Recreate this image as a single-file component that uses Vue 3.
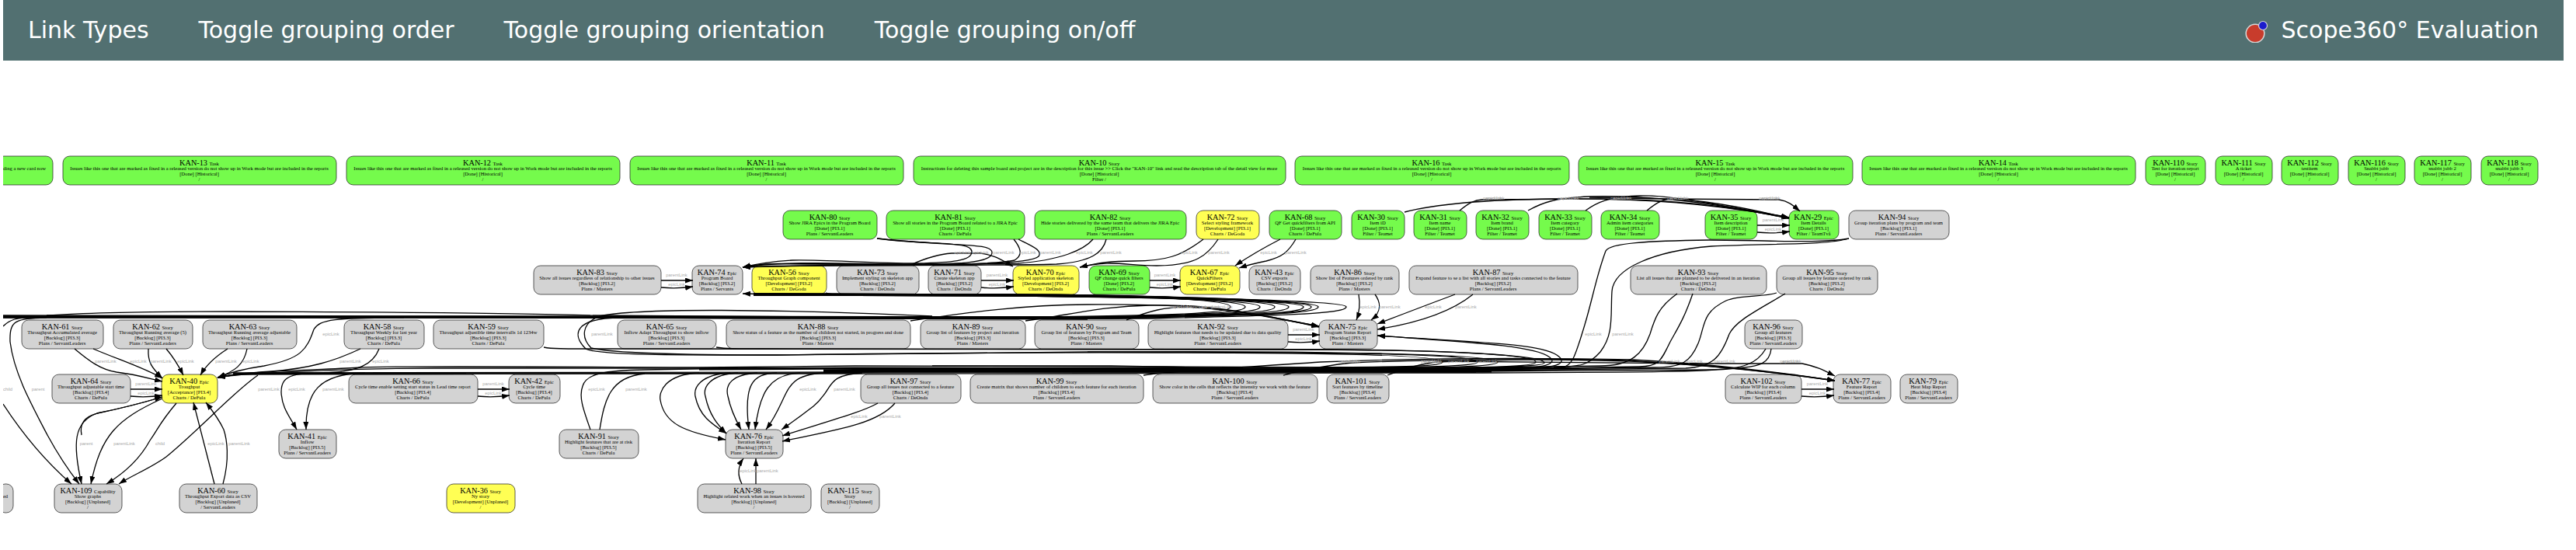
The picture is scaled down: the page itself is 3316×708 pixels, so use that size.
<script setup>
// The graph is laid out in points; coordinates below are on a grid of 15/11 points.
const U = 15 / 11
const ROW_H = 37
const rowTop = [201, 271, 342, 412, 482, 553, 623]
const viewBox = [4, 78, 3296, 630].map((v) => v * U).join(' ')

const menu = [
  'Link Types',
  'Toggle grouping order',
  'Toggle grouping orientation',
  'Toggle grouping on/off',
]

const fixed =
  'Issues like this one that are marked as fixed in a released version do not show up in Work mode but are included in the reports'

// row, left, right, color, key, type, summary, status, team
const rawNodes = [
  [0, -4, 68, 'done', '', '', 'ding a new card now', '', ''],
  [0, 81, 433, 'done', 'KAN-13', 'Task', fixed, '[Done] [Historical]', '/'],
  [0, 446, 798, 'done', 'KAN-12', 'Task', fixed, '[Done] [Historical]', '/'],
  [0, 811, 1163, 'done', 'KAN-11', 'Task', fixed, '[Done] [Historical]', '/'],
  [0, 1176, 1655, 'done', 'KAN-10', 'Story', 'Instructions for deleting this sample board and project are in the description for this issue >> Click the "KAN-10" link and read the description tab of the detail view for more', '[Done] [Historical]', 'Filter /'],
  [0, 1667, 2020, 'done', 'KAN-16', 'Task', fixed, '[Done] [Historical]', '/'],
  [0, 2032, 2385, 'done', 'KAN-15', 'Task', fixed, '[Done] [Historical]', '/'],
  [0, 2397, 2749, 'done', 'KAN-14', 'Task', fixed, '[Done] [Historical]', '/'],
  [0, 2762, 2839, 'done', 'KAN-110', 'Story', 'Test for iteration report', '[Done] [Historical]', '/'],
  [0, 2852, 2925, 'done', 'KAN-111', 'Story', 'A ticket', '[Done] [Historical]', '/'],
  [0, 2937, 3010, 'done', 'KAN-112', 'Story', 'testitem', '[Done] [Historical]', '/'],
  [0, 3023, 3096, 'done', 'KAN-116', 'Story', 'Snabbt jobb', '[Done] [Historical]', '/'],
  [0, 3108, 3181, 'done', 'KAN-117', 'Story', 'snabbt jobb 2', '[Done] [Historical]', '/'],
  [0, 3194, 3267, 'done', 'KAN-118', 'Story', 'snabbt jobb 3', '[Done] [Historical]', '/'],

  [1, 1008, 1129, 'done', 'KAN-80', 'Story', 'Show JIRA Epics in the Program Board', '[Done] [PI3.1]', 'Plans / ServantLeaders'],
  [1, 1141, 1319, 'done', 'KAN-81', 'Story', 'Show all stories in the Program Board related to a JIRA Epic', '[Done] [PI3.1]', 'Charts / DeFula'],
  [1, 1332, 1527, 'done', 'KAN-82', 'Story', 'Hide stories delivered by the same team that delivers the JIRA Epic', '[Done] [PI3.1]', 'Plans / ServantLeaders'],
  [1, 1540, 1621, 'active', 'KAN-72', 'Story', 'Select styling framework', '[Development] [PI3.1]', 'Charts / DeGoda'],
  [1, 1634, 1727, 'done', 'KAN-68', 'Story', 'QF Get quickfilters from API', '[Done] [PI3.1]', 'Charts / DeFula'],
  [1, 1740, 1808, 'done', 'KAN-30', 'Story', 'Item iD', '[Done] [PI3.1]', 'Filter / Teamet'],
  [1, 1820, 1888, 'done', 'KAN-31', 'Story', 'Item name', '[Done] [PI3.1]', 'Filter / Teamet'],
  [1, 1900, 1968, 'done', 'KAN-32', 'Story', 'Item brand', '[Done] [PI3.1]', 'Filter / Teamet'],
  [1, 1981, 2049, 'done', 'KAN-33', 'Story', 'Item category', '[Done] [PI3.1]', 'Filter / Teamet'],
  [1, 2061, 2136, 'done', 'KAN-34', 'Story', 'Admin item categories', '[Done] [PI3.1]', 'Filter / Teamet'],
  [1, 2195, 2262, 'done', 'KAN-35', 'Story', 'Item description', '[Done] [PI3.1]', 'Filter / Teamet'],
  [1, 2303, 2367, 'done', 'KAN-29', 'Epic', 'Item Details', '[Done] [PI3.1]', 'Filter / TeamTvå'],
  [1, 2380, 2509, 'open', 'KAN-94', 'Story', 'Group iteration plans by program and team', '[Backlog] [PI3.1]', 'Plans / ServantLeaders'],

  [2, 687, 851, 'open', 'KAN-83', 'Story', 'Show all issues regardless of relationship to other issues', '[Backlog] [PI3.2]', 'Plans / Masters'],
  [2, 891, 956, 'open', 'KAN-74', 'Epic', 'Program Board', '[Backlog] [PI3.2]', 'Plans / Servants'],
  [2, 968, 1064, 'active', 'KAN-56', 'Story', 'Throughput Graph component', '[Development] [PI3.2]', 'Charts / DeGoda'],
  [2, 1077, 1183, 'open', 'KAN-73', 'Story', 'Implement styling on skeleton app', '[Backlog] [PI3.2]', 'Charts / DeOnda'],
  [2, 1195, 1263, 'open', 'KAN-71', 'Story', 'Create skeleton app', '[Backlog] [PI3.2]', 'Charts / DeOnda'],
  [2, 1304, 1389, 'active', 'KAN-70', 'Epic', 'Styled application skeleton', '[Development] [PI3.2]', 'Charts / DeOnda'],
  [2, 1402, 1480, 'done', 'KAN-69', 'Story', 'QF change quick filters', '[Done] [PI3.2]', 'Charts / DeFula'],
  [2, 1519, 1596, 'active', 'KAN-67', 'Epic', 'QuickFilters', '[Development] [PI3.2]', 'Charts / DeFula'],
  [2, 1608, 1674, 'open', 'KAN-43', 'Epic', 'CSV exports', '[Backlog] [PI3.2]', 'Charts / DeOnda'],
  [2, 1687, 1801, 'open', 'KAN-86', 'Story', 'Show list of Features ordered by rank', '[Backlog] [PI3.2]', 'Plans / Masters'],
  [2, 1814, 2031, 'open', 'KAN-87', 'Story', 'Expand feature to se a list with all stories and tasks connected to the feature', '[Backlog] [PI3.2]', 'Plans / ServantLeaders'],
  [2, 2099, 2274, 'open', 'KAN-93', 'Story', 'List all issues that are planned to be delivered in an iteration', '[Backlog] [PI3.2]', 'Charts / DeOnda'],
  [2, 2287, 2417, 'open', 'KAN-95', 'Story', 'Group all issues by feature ordered by rank', '[Backlog] [PI3.2]', 'Charts / DeOnda'],

  [3, 28, 133, 'open', 'KAN-61', 'Story', 'Throughput Accumulated average', '[Backlog] [PI3.3]', 'Plans / ServantLeaders'],
  [3, 146, 248, 'open', 'KAN-62', 'Story', 'Throughput Running average (5)', '[Backlog] [PI3.3]', 'Plans / ServantLeaders'],
  [3, 261, 382, 'open', 'KAN-63', 'Story', 'Throughput Running average adjustable', '[Backlog] [PI3.3]', 'Plans / ServantLeaders'],
  [3, 443, 546, 'open', 'KAN-58', 'Story', 'Throughput Weekly for last year', '[Backlog] [PI3.3]', 'Charts / DeFula'],
  [3, 558, 700, 'open', 'KAN-59', 'Story', 'Throughput adjustible time intervalls 1d 1234w', '[Backlog] [PI3.3]', 'Charts / DeFula'],
  [3, 795, 922, 'open', 'KAN-65', 'Story', 'Inflow Adapt Throughput to show inflow', '[Backlog] [PI3.3]', 'Plans / ServantLeaders'],
  [3, 935, 1172, 'open', 'KAN-88', 'Story', 'Show status of a feature as the number of children not started, in progress and done', '[Backlog] [PI3.3]', 'Plans / Masters'],
  [3, 1185, 1320, 'open', 'KAN-89', 'Story', 'Group list of features by project and iteration', '[Backlog] [PI3.3]', 'Plans / Masters'],
  [3, 1332, 1466, 'open', 'KAN-90', 'Story', 'Group list of features by Program and Team', '[Backlog] [PI3.3]', 'Plans / Masters'],
  [3, 1478, 1658, 'open', 'KAN-92', 'Story', 'Highlight features that needs to be updated due to data quality', '[Backlog] [PI3.3]', 'Plans / ServantLeaders'],
  [3, 1698, 1773, 'open', 'KAN-75', 'Epic', 'Program Status Report', '[Backlog] [PI3.3]', 'Plans / Masters'],
  [3, 2246, 2320, 'open', 'KAN-96', 'Story', 'Group all features', '[Backlog] [PI3.3]', 'Plans / ServantLeaders'],

  [4, 67, 168, 'open', 'KAN-64', 'Story', 'Throughput adjustable start time', '[Backlog] [PI3.4]', 'Charts / DeFula'],
  [4, 208, 280, 'active', 'KAN-40', 'Epic', 'Troughput', '[Acceptance] [PI3.4]', 'Charts / DeFula'],
  [4, 449, 615, 'open', 'KAN-66', 'Story', 'Cycle time enable setting start status in Lead time report', '[Backlog] [PI3.4]', 'Charts / DeFula'],
  [4, 655, 721, 'open', 'KAN-42', 'Epic', 'Cycle time', '[Backlog] [PI3.4]', 'Charts / DeFula'],
  [4, 1108, 1237, 'open', 'KAN-97', 'Story', 'Group all issues not connected to a feature', '[Backlog] [PI3.4]', 'Charts / DeOnda'],
  [4, 1249, 1472, 'open', 'KAN-99', 'Story', 'Create matrix that shows number of children to each feature for each iteration', '[Backlog] [PI3.4]', 'Plans / ServantLeaders'],
  [4, 1484, 1696, 'open', 'KAN-100', 'Story', 'Show color in the cells that reflects the intensity we work with the feature', '[Backlog] [PI3.4]', 'Plans / ServantLeaders'],
  [4, 1708, 1788, 'open', 'KAN-101', 'Story', 'Sort features by timeline', '[Backlog] [PI3.4]', 'Plans / ServantLeaders'],
  [4, 2221, 2319, 'open', 'KAN-102', 'Story', 'Calculate WIP for each column', '[Backlog] [PI3.4]', 'Plans / ServantLeaders'],
  [4, 2360, 2434, 'open', 'KAN-77', 'Epic', 'Feature Report', '[Backlog] [PI3.4]', 'Plans / ServantLeaders'],
  [4, 2446, 2520, 'open', 'KAN-79', 'Epic', 'Heat Map Report', '[Backlog] [PI3.4]', 'Plans / ServantLeaders'],

  [5, 359, 433, 'open', 'KAN-41', 'Epic', 'Inflow', '[Backlog] [PI3.5]', 'Plans / ServantLeaders'],
  [5, 720, 822, 'open', 'KAN-91', 'Story', 'Highlight features that are at risk', '[Backlog] [PI3.5]', 'Charts / DeFula'],
  [5, 934, 1008, 'open', 'KAN-76', 'Epic', 'Iteration Report', '[Backlog] [PI3.5]', 'Plans / ServantLeaders'],

  [6, -2, 17, 'open', '', '', 'ed', '', ''],
  [6, 70, 157, 'open', 'KAN-109', 'Capability', 'Show graphs', '[Backlog] [Unplaned]', '/'],
  [6, 231, 331, 'open', 'KAN-60', 'Story', 'Throughput Export data as CSV', '[Backlog] [Unplaned]', '/ ServantLeaders'],
  [6, 575, 663, 'active', 'KAN-36', 'Story', 'Ny story', '[Development] [Unplaned]', '/'],
  [6, 898, 1044, 'open', 'KAN-98', 'Story', 'Highlight related work when an issues is hovered', '[Backlog] [Unplaned]', '/'],
  [6, 1057, 1132, 'open', 'KAN-115', 'Story', 'Story', '[Backlog] [Unplaned]', '/'],
]

const nodes = rawNodes.map(([row, l, r, color, key, type, summary, status, team]) => ({
  l, r, color, key, type, summary, status, team,
  top: rowTop[row],
  x: l * U,
  y: rowTop[row] * U,
  w: (r - l) * U,
  h: ROW_H * U,
  cx: ((l + r - 1) / 2) * U,
}))

const byKey = Object.fromEntries(nodes.map((n) => [n.key, n]))

// Neighbours in one row joined by a parentLink and an epicLink.
const pairs = [
  ['KAN-83', 'KAN-74'], ['KAN-71', 'KAN-70'], ['KAN-69', 'KAN-67'], ['KAN-35', 'KAN-29'],
  ['KAN-92', 'KAN-75'], ['KAN-64', 'KAN-40'], ['KAN-66', 'KAN-42'], ['KAN-102', 'KAN-77'],
].map(([a, b]) => ({ x1: byKey[a].r, x2: byKey[b].l, y: byKey[a].top }))

const arrows = [
  // KAN-80, KAN-81, KAN-82 to KAN-74
  'M1129 307C1200 316 1251 310 1251 324C1251 336 1225 338 1180 339C1120 339 1060 334 1020 335Q985 337 956 344',
  'M1129 307C1230 318 1277 312 1277 325C1277 340 1230 340 1150 340C1080 339 1010 336 956 344',
  'M1305 308C1313 318 1318 328 1306 335C1280 342 1150 341 1060 340S990 339 956 344',
  'M1311 308C1325 315 1343 322 1337 330C1325 341 1230 341 1100 340S990 339 956 344',
  'M1407 308C1395 322 1365 335 1310 339C1200 342 1050 340 956 344',
  'M1424 308C1420 325 1405 337 1360 340C1250 343 1050 340 956 344',
  'M1172 341C1190 333 1208 327 1225 326L1262 326C1280 328 1290 335 1304 343',
  'M1549 308C1520 330 1500 336 1460 336C1430 336 1415 338 1390 344',
  'M1568 308C1555 328 1540 342 1489 342C1450 342 1430 334 1390 344',
  'M1648 308Q1615 325 1590 342',
  'M1668 308C1658 325 1650 331 1630 336Q1610 340 1595 345',
  // items to KAN-29
  'M1808 273C1850 262 1920 257 2000 256C2120 255 2200 262 2303 280',
  'M1879 271C1890 262 1898 257 1908 257L2060 256C2150 257 2220 264 2303 281',
  'M1967 271C1985 261 2000 255 2046 253C2130 251 2210 262 2303 280',
  'M2041 271C2055 261 2070 253 2111 252C2160 251 2230 268 2303 281',
  'M2120 271C2130 263 2138 257 2150 256C2200 258 2250 268 2303 281',
  'M2046 254L2140 256L2290 257C2303 259 2309 265 2317 272',
  // KAN-86, KAN-87 and the lower bundle to KAN-75
  'M1749 379Q1752 397 1746 412',
  'M1770 379C1778 390 1778 402 1765 412',
  'M1873 379Q1830 395 1773 417',
  'M1896 379C1870 400 1830 415 1773 424',
  'M1940 474C1990 474 2005 468 1995 460C1975 444 1880 440 1773 432',
  'M1960 474C2010 474 2018 466 2004 457C1980 441 1880 440 1773 432',
  'M1172 413C1230 405 1300 393 1400 392C1510 391 1560 397 1600 402L1698 420',
  'M1320 413C1380 405 1420 394 1480 393C1540 392 1570 397 1620 405L1698 420',
  'M1450 412C1480 400 1500 395 1530 395C1570 397 1620 403 1698 421',
  // to KAN-77
  'M1472 483C1500 478 1600 473 1700 466C1850 460 2000 461 2100 463C2200 468 2300 480 2362 490',
  'M1652 483C1680 475 1720 469 1740 467C1850 462 2000 462 2100 465C2200 469 2300 481 2362 490',
  'M1786 483C1810 474 1830 468 1850 466C2000 461 2080 462 2120 466C2200 470 2300 481 2362 490',
  'M1850 465C2000 467 2150 468 2200 468L2320 468C2340 472 2350 478 2362 484',
  // to KAN-40
  'M96 449C115 465 130 476 150 479C175 482 195 488 209 491',
  'M120 449C150 462 185 473 209 487',
  'M191 449C190 466 195 473 209 487',
  'M214 449Q226 463 236 483',
  'M293 449Q268 465 258 483',
  'M318 449C314 470 302 478 280 486',
  'M464 449C430 465 400 474 350 478Q300 481 280 486',
  'M488 449C480 470 460 478 420 480L310 481L280 486',
  'M520 409C430 409 412 411 404 424C395 450 388 462 340 471Q305 476 280 486',
  'M276 623L249 518',
  'M287 623C296 590 292 565 288 553Q281 538 265 518',
  'M105 560C100 535 125 533 125 532Q165 524 209 511',
  // to KAN-109
  'M4 520C30 560 60 595 92 623',
  'M60 409C20 410 12 412 13 440C18 480 40 520 61 560Q80 595 102 623',
  'M209 511Q165 524 125 532C95 543 93 570 105 623',
  'M209 513C150 540 130 560 117 623',
  'M227 519C205 545 205 550 193 567Q175 600 137 623',
  'M332 483C300 505 260 550 214 588C195 602 170 612 153 623',
  // to KAN-41
  'M440 479C380 480 362 480 362 505C363 525 372 535 382 553',
  'M470 480C410 481 393 505 394 553',
  // to KAN-76
  'M900 480C855 482 848 505 850 515C855 545 880 556 934 566',
  'M940 480C900 482 893 500 895 510C900 535 915 545 935 558',
  'M950 480C912 482 905 500 908 510C913 535 925 548 935 558',
  'M975 480C942 482 933 495 937 510Q941 530 954 553',
  'M1000 480C968 481 957 495 964 553',
  'M1030 480C990 482 978 505 972 553',
  'M1060 480C1005 483 1018 510 986 553',
  'M1110 480C1060 483 1075 500 1047 523Q1025 540 1006 553',
  'M1130 519C1110 530 1080 538 1007 561',
  'M1152 519C1130 545 1080 553 1007 568',
  'M955 623Q946 606 957 590',
  'M973 623L973 590',
  // bundle ends
  'M1000 379L956 378',
  'M600 481L310 481L280 486',
]

const hooks = [1584, 1603, 1622, 1641, 1659, 1678, 1688, 1697, 1733]

const lines = [
  ...hooks.map(
    (x, i) =>
      `M970 ${378 + (i % 3)}L1300 ${379 + (i % 3)}C1480 ${380 + (i % 3)} ${x} 386 ${x} 395C${x} 404 ${x - 80} 406 ${x - 250} ${408 + (i % 3)}L1100 ${408 + (i % 3)}`,
  ),
  'M1063 377Q1068 379 1085 379',
  // upper bundle
  'M4 406L600 407L1400 408',
  'M4 407L1400 409',
  'M4 408L700 409L1400 411',
  'M4 409L500 409L1100 410',
  'M60 406C120 402 200 401 300 401C500 402 640 402 760 406L1200 409',
  'M50 408C20 408 12 412 4 420',
  'M1100 410L800 409C740 409 735 430 754 449C770 458 900 457 1000 457C1150 455 1300 453 1500 454C1700 454 1857 457 1857 466C1857 472 1800 472 1700 473',
  'M1200 407C1000 398 820 396 772 407C748 416 748 435 761 448C790 455 900 457 1000 457L1400 453C1700 453 1902 455 1902 466C1902 473 1800 472 1700 474',
  'M1400 453C1700 451 1928 456 1928 466C1928 473 1850 473 1700 474',
  'M700 447C710 449 720 449 780 449L1700 450C1850 451 1977 456 1977 466C1977 473 1900 473 1800 474',
  'M922 447C935 449 945 449 980 449L1700 450C1850 450 1988 457 1988 467C1988 473 1900 473 1800 474',
  // lower bundle
  'M280 486C320 477 420 476 464 473C500 471 700 472 900 473L1100 471L1500 472L1750 473L2000 474',
  'M280 486C320 479 480 474 560 474L1100 474',
  'M300 480L1100 479L1900 479',
  'M300 481L1100 481L1900 480',
  'M300 482L1100 480',
  'M1200 471L1430 471L1600 474',
  // long sources on the right
  'M2380 307C2340 314 2280 309 2200 309C2120 310 2072 313 2067 323C2055 355 2050 385 2040 418C2028 458 2024 472 2010 473L1900 474',
  'M2380 307C2350 316 2280 313 2203 317C2130 323 2077 345 2075 375C2073 405 2078 430 2060 453C2045 470 2035 472 2000 473',
  'M2159 378C2135 395 2130 410 2124 430C2115 455 2100 471 2060 471L1900 473',
  'M2179 378C2168 410 2160 422 2150 440C2138 465 2135 472 2110 472L1900 475',
  'M2287 377C2270 383 2240 379 2222 387C2190 402 2195 420 2186 442C2176 466 2165 473 2130 473L1900 476',
  'M2298 378C2265 398 2235 412 2226 430C2215 460 2205 472 2170 474L1900 477',
  'M2273 449C2262 468 2245 475 2200 476L1900 478',
  'M2280 449C2278 468 2265 472 2235 474C2180 480 2050 479 1900 480',
  // KAN-91
  'M760 553C750 525 745 510 750 497C755 480 780 477 830 476L950 474',
  'M772 553C778 515 785 485 830 481',
]

// Wide strands where many edges run together.
const strands = [
  'M900 475L1100 474L1950 475',
  'M1060 477L1140 476L1960 476',
  'M1060 479L1140 478L1920 478',
  'M990 379L1300 380L1500 383L1560 386',
  'M4 408L600 408L1400 409',
]

const P = 'parentLink'
const E = 'epicLink'
const labels = [
  [E, 1239, 327], [E, 1262, 327], [P, 1292, 327], [E, 1323, 327], [P, 1352, 327], [E, 1396, 327],
  [P, 1430, 327], [E, 1531, 327], [P, 1569, 327], [E, 1633, 327], [P, 1668, 327],
  ...[1923, 2019, 2087, 2160, 2278].flatMap((x) => [[E, x, 257], [P, x, 257]]),
  [E, 1761, 397], [P, 1789, 397], [E, 1845, 397], [P, 1887, 397],
  [P, 1520, 397], [E, 1520, 397], [E, 1543, 397], [P, 1557, 397], [P, 1573, 397],
  [P, 1737, 467], [E, 1737, 467], [P, 1843, 467], [E, 1843, 467], [P, 1878, 467], [P, 1914, 467],
  [P, 2149, 467], [E, 2181, 467], [P, 2220, 467], [P, 2305, 467], [E, 2305, 467],
  [E, 2051, 432], [P, 2089, 432], [P, 775, 432], [E, 426, 432],
  [P, 136, 467], [E, 178, 467], [P, 207, 467], [E, 239, 467], [P, 291, 467], [E, 323, 467],
  [P, 451, 467], [E, 490, 467],
  [P, 346, 503], [E, 382, 503], [P, 429, 503], ['child', 10, 503], ['parent', 49, 503],
  ['parent', 111, 573], [P, 160, 573], ['child', 206, 573], [E, 278, 573], [P, 308, 573],
  [E, 768, 503], [P, 819, 503], [E, 1040, 503], [P, 1087, 503],
  [E, 1106, 538], [P, 1146, 538], [E, 963, 608], [P, 988, 608],
  ...pairs.flatMap(({ x1, x2, y }) => [
    [P, (x1 + x2) / 2, y + 14],
    [E, (x1 + x2) / 2, y + 26],
  ]),
]
</script>

<template>
  <div class="page">
    <header class="bar">
      <nav class="menu">
        <button v-for="m in menu" :key="m" type="button" class="item">{{ m }}</button>
      </nav>
      <a href="#" class="brand">
        <svg class="logo" viewBox="0 0 32 32" aria-hidden="true">
          <circle cx="14" cy="20" r="11.8" fill="#c83c2c" stroke="#d8d8d8" stroke-width="1.5" />
          <circle cx="24" cy="10" r="5.5" fill="#1c1ccc" stroke="#d8d8d8" stroke-width="1.2" />
        </svg>
        <span>Scope360° Evaluation</span>
      </a>
    </header>

    <main>
      <svg class="graph" :viewBox="viewBox" role="img" aria-label="Issue dependency graph">
        <defs>
          <marker id="head" viewBox="0 0 10 7" refX="10" refY="3.5" markerWidth="10" markerHeight="7" markerUnits="userSpaceOnUse" orient="auto">
            <path d="M0 0L10 3.5L0 7Z" />
          </marker>
        </defs>

        <g v-for="(n, i) in nodes" :key="i" class="node">
          <rect :class="n.color" :x="n.x" :y="n.y" :width="n.w" :height="n.h" rx="12" />
          <text v-if="n.key" :x="n.cx" :y="n.y + 16"><tspan class="key">{{ n.key + ' ' }}</tspan><tspan>{{ n.type }}</tspan></text>
          <text :x="n.cx" :y="n.y + 25">{{ n.summary }}</text>
          <text v-if="n.status" :x="n.cx" :y="n.y + 34">{{ n.status }}</text>
          <text v-if="n.team" :x="n.cx" :y="n.y + 43">{{ n.team }}</text>
        </g>

        <g class="edges" :transform="`scale(${U})`">
          <path v-for="(d, i) in strands" :key="'s' + i" class="strand" :d="d" />
          <path v-for="(d, i) in lines" :key="'l' + i" :d="d" />
          <path v-for="(d, i) in arrows" :key="'a' + i" :d="d" marker-end="url(#head)" />
          <template v-for="(p, i) in pairs" :key="'p' + i">
            <path :d="`M${p.x1} ${p.y + 19}L${p.x2 + 1} ${p.y + 19}`" marker-end="url(#head)" />
            <path :d="`M${p.x1} ${p.y + 28}Q${(p.x1 + p.x2) / 2} ${p.y + 30} ${p.x2 + 1} ${p.y + 27}`" marker-end="url(#head)" />
          </template>
        </g>

        <g class="labels">
          <text v-for="([t, x, y], i) in labels" :key="i" :x="x * U" :y="y * U">{{ t }}</text>
        </g>
      </svg>
    </main>
  </div>
</template>

<style>
body {
  margin: 0;
  background: #fff;
}
</style>

<style scoped>
.page {
  padding: 0 16px 0 4px;
}
.bar {
  display: flex;
  justify-content: space-between;
  align-items: center;
  height: 78px;
  background: #527071;
}
.menu {
  display: flex;
}
.item,
.brand {
  font-family: "DejaVu Sans", Verdana, sans-serif;
  font-size: 30px;
  line-height: 36px;
  color: #fff;
  white-space: nowrap;
}
.item {
  padding: 0 32px;
  border: 0;
  background: none;
  cursor: pointer;
}
.brand {
  display: flex;
  align-items: center;
  gap: 16px;
  padding-right: 32px;
  text-decoration: none;
}
.logo {
  width: 32px;
  height: 32px;
}
.graph {
  display: block;
  width: 100%;
  height: auto;
}
.node text {
  font-family: "Liberation Serif", "Times New Roman", serif;
  font-size: 9px;
  text-anchor: middle;
}
.node .key {
  font-size: 14px;
  white-space: pre;
}
.node rect {
  stroke: #222;
  stroke-width: 1;
}
.done {
  fill: #75fb4c;
}
.active {
  fill: #ffff54;
}
.open {
  fill: #d3d3d3;
}
.edges > path {
  fill: none;
  stroke: #000;
  stroke-width: 1.3;
}
.edges > .strand {
  stroke-width: 3;
}
.labels text {
  font-family: "Liberation Sans", Arial, sans-serif;
  font-size: 8px;
  text-anchor: middle;
  fill: #a9a9a9;
}
</style>
